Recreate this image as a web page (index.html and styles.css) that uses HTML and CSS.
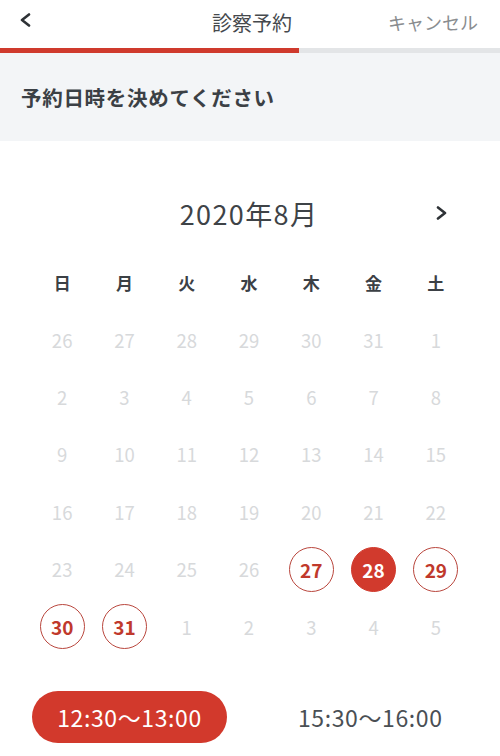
FILE: index.html
```html
<!DOCTYPE html>
<html lang="ja">
<head>
<meta charset="utf-8">
<link rel="stylesheet" href="styles.css">
</head>
<body>
<div class="app">
  <header class="topbar">
    <div class="topbar-left">
      <svg class="chev" width="12" height="14" viewBox="0 0 12 14"><polyline points="10,1.5 3,7 10,12.5" fill="none" stroke="#2e3236" stroke-width="2.6" stroke-linecap="round" stroke-linejoin="round"/></svg>
    </div>
    <div class="topbar-title">診察予約</div>
    <div class="topbar-right">キャンセル</div>
  </header>
  <div class="progress"><div class="progress-fill" style="width:299px"></div></div>
  <section class="prompt">予約日時を決めてください</section>

  <section class="calendar">
    <div class="month-row">
      <div></div>
      <div class="month-title">2020年8月</div>
      <div class="month-next">
        <svg width="12" height="14" viewBox="0 0 12 14"><polyline points="2,1.5 9,7 2,12.5" fill="none" stroke="#2e3236" stroke-width="2.6" stroke-linecap="round" stroke-linejoin="round"/></svg>
      </div>
    </div>
    <div class="weekdays">
      <div>日</div><div>月</div><div>火</div><div>水</div><div>木</div><div>金</div><div>土</div>
    </div>
    <div class="days">
      <div class="day off">26</div><div class="day off">27</div><div class="day off">28</div><div class="day off">29</div><div class="day off">30</div><div class="day off">31</div><div class="day off">1</div>
      <div class="day off">2</div><div class="day off">3</div><div class="day off">4</div><div class="day off">5</div><div class="day off">6</div><div class="day off">7</div><div class="day off">8</div>
      <div class="day off">9</div><div class="day off">10</div><div class="day off">11</div><div class="day off">12</div><div class="day off">13</div><div class="day off">14</div><div class="day off">15</div>
      <div class="day off">16</div><div class="day off">17</div><div class="day off">18</div><div class="day off">19</div><div class="day off">20</div><div class="day off">21</div><div class="day off">22</div>
      <div class="day off">23</div><div class="day off">24</div><div class="day off">25</div><div class="day off">26</div><div class="day"><span class="ring">27</span></div><div class="day"><span class="ring selected">28</span></div><div class="day"><span class="ring">29</span></div>
      <div class="day"><span class="ring">30</span></div><div class="day"><span class="ring">31</span></div><div class="day off">1</div><div class="day off">2</div><div class="day off">3</div><div class="day off">4</div><div class="day off">5</div>
    </div>
  </section>

  <section class="times">
    <div class="time selected">12:30～13:00</div>
    <div class="time">15:30～16:00</div>
  </section>
</div>
</body>
</html>
```

FILE: styles.css
```css
html, body {
  margin: 0;
  padding: 0;
  background: #ffffff;
}
body {
  font-family: "Noto Sans CJK JP", "Noto Sans", sans-serif;
  color: #3a3f44;
  width: 500px;
  height: 756px;
  overflow: hidden;
}
.topbar {
  height: 48px;
  display: grid;
  grid-template-columns: 1fr auto 1fr;
  align-items: center;
}
.topbar-left {
  padding-left: 19px;
  display: flex;
  align-items: center;
  margin-top: -8px;
}
.topbar-title {
  font-size: 20px;
  color: #45494d;
  margin-left: 4px;
  margin-top: -4px;
}
.topbar-right {
  justify-self: end;
  padding-right: 22px;
  font-size: 18px;
  color: #8a8d90;
  margin-top: -4px;
}
.progress {
  height: 5px;
  background: #e3e5e7;
}
.progress-fill {
  height: 100%;
  background: #cf3a2d;
}
.prompt {
  height: 88px;
  background: #f3f5f7;
  display: flex;
  align-items: center;
  padding-left: 21px;
  font-size: 20.5px;
  font-weight: 700;
  color: #3b4045;
  letter-spacing: 0.7px;
}
.calendar {
  padding: 0 33px 0 31px;
}
.month-row {
  margin-top: 52px;
  height: 40px;
  display: grid;
  grid-template-columns: 1fr auto 1fr;
  align-items: center;
}
.month-title {
  font-size: 27px;
  letter-spacing: 1.4px;
  color: #3e4347;
  margin-left: 0;
}
.month-next {
  justify-self: end;
  padding-right: 19px;
  display: flex;
  align-items: center;
}
.weekdays {
  margin-top: 21px;
  height: 57px;
  display: grid;
  grid-template-columns: repeat(7, 1fr);
  align-items: center;
  justify-items: center;
  font-size: 17px;
  font-weight: 700;
  color: #3b4045;
}
.days {
  display: grid;
  grid-template-columns: repeat(7, 1fr);
  grid-auto-rows: 57.4px;
  align-items: center;
  justify-items: center;
}
.day {
  font-size: 18.5px;
  color: #3b4045;
}
.day.off {
  color: #d7d9db;
}
.ring {
  width: 45px;
  height: 45px;
  box-sizing: border-box;
  border: 1.5px solid #b9463d;
  border-radius: 50%;
  display: flex;
  align-items: center;
  justify-content: center;
  font-weight: 700;
  color: #c0392c;
  font-size: 19px;
}
.ring.selected {
  background: #d13a2d;
  border-color: #d13a2d;
  color: #ffffff;
}
.times {
  margin-top: 35.6px;
  padding-left: 32px;
  display: flex;
  align-items: center;
  gap: 71px;
}
.time {
  font-size: 23px;
  letter-spacing: 0.6px;
  color: #4a4f54;
}
.time.selected {
  width: 195px;
  height: 52px;
  border-radius: 26px;
  background: #d2392c;
  color: #ffffff;
  display: flex;
  align-items: center;
  justify-content: center;
}
```
